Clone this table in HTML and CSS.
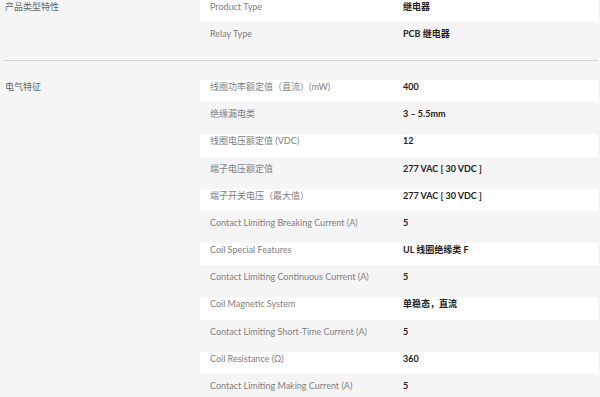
FILE: index.html
```html
<!DOCTYPE html>
<html lang="zh">
	<head>
		<meta charset="UTF-8" />
		<meta name="viewport" content="width=device-width, initial-scale=1.0" />
		<title>产品规格</title>
		<link rel="stylesheet" href="styles.css">
	</head>
	<body>
		<div class="spec-table">
			<div class="spec-group first">
				<div class="group-title">产品类型特性</div>
				<div class="group-rows">
					<div class="spec-row"><span class="spec-label">Product Type</span><span class="spec-value">继电器</span></div>
					<div class="spec-row"><span class="spec-label">Relay Type</span><span class="spec-value">PCB 继电器</span></div>
				</div>
			</div>
			<div class="spec-group">
				<div class="group-title">电气特征</div>
				<div class="group-rows">
					<div class="spec-row"><span class="spec-label">线圈功率额定值（直流）(mW)</span><span class="spec-value">400</span></div>
					<div class="spec-row"><span class="spec-label">绝缘漏电类</span><span class="spec-value">3 – 5.5mm</span></div>
					<div class="spec-row"><span class="spec-label">线圈电压额定值 (VDC)</span><span class="spec-value">12</span></div>
					<div class="spec-row"><span class="spec-label">端子电压额定值</span><span class="spec-value">277 VAC [ 30 VDC ]</span></div>
					<div class="spec-row"><span class="spec-label">端子开关电压（最大值）</span><span class="spec-value">277 VAC [ 30 VDC ]</span></div>
					<div class="spec-row"><span class="spec-label">Contact Limiting Breaking Current (A)</span><span class="spec-value">5</span></div>
					<div class="spec-row"><span class="spec-label">Coil Special Features</span><span class="spec-value">UL 线圈绝缘类 F</span></div>
					<div class="spec-row"><span class="spec-label">Contact Limiting Continuous Current (A)</span><span class="spec-value">5</span></div>
					<div class="spec-row"><span class="spec-label">Coil Magnetic System</span><span class="spec-value">单稳态，直流</span></div>
					<div class="spec-row"><span class="spec-label">Contact Limiting Short-Time Current (A)</span><span class="spec-value">5</span></div>
					<div class="spec-row"><span class="spec-label">Coil Resistance (Ω)</span><span class="spec-value">360</span></div>
					<div class="spec-row"><span class="spec-label">Contact Limiting Making Current (A)</span><span class="spec-value">5</span></div>
				</div>
			</div>
		</div>
	</body>
</html>
```

FILE: styles.css
```css
body {
	margin: 0;
	background: #f5f5f5;
	font-family: Lato, "Noto Sans CJK SC", sans-serif;
	font-size: 9px;
	line-height: 11px;
	color: #222;
	overflow: hidden;
}

.spec-table {
	padding-right: 2px;
}

.spec-group {
	display: grid;
	grid-template-columns: 200px 1fr;
	padding: 19px 0 5.6px;
	margin-left: 4px;
	border-top: 1px solid #d6d6d6;
}

.spec-group.first {
	padding-top: 0;
	border-top: none;
}

.group-title {
	color: #666;
	padding: 1px 0 0 1px;
}

.group-rows {
	margin-left: -4px;
	display: flex;
	flex-direction: column;
}

.spec-row {
	display: grid;
	grid-template-columns: 193px 1fr;
	height: 22.2px;
	margin-bottom: 5px;
	padding: 1px 0 0 10px;
	box-sizing: border-box;
}

.spec-row:nth-child(odd) {
	background: #fff;
}

.spec-label {
	color: #808080;
}

.spec-value {
	font-weight: bold;
	color: #222;
}
```
